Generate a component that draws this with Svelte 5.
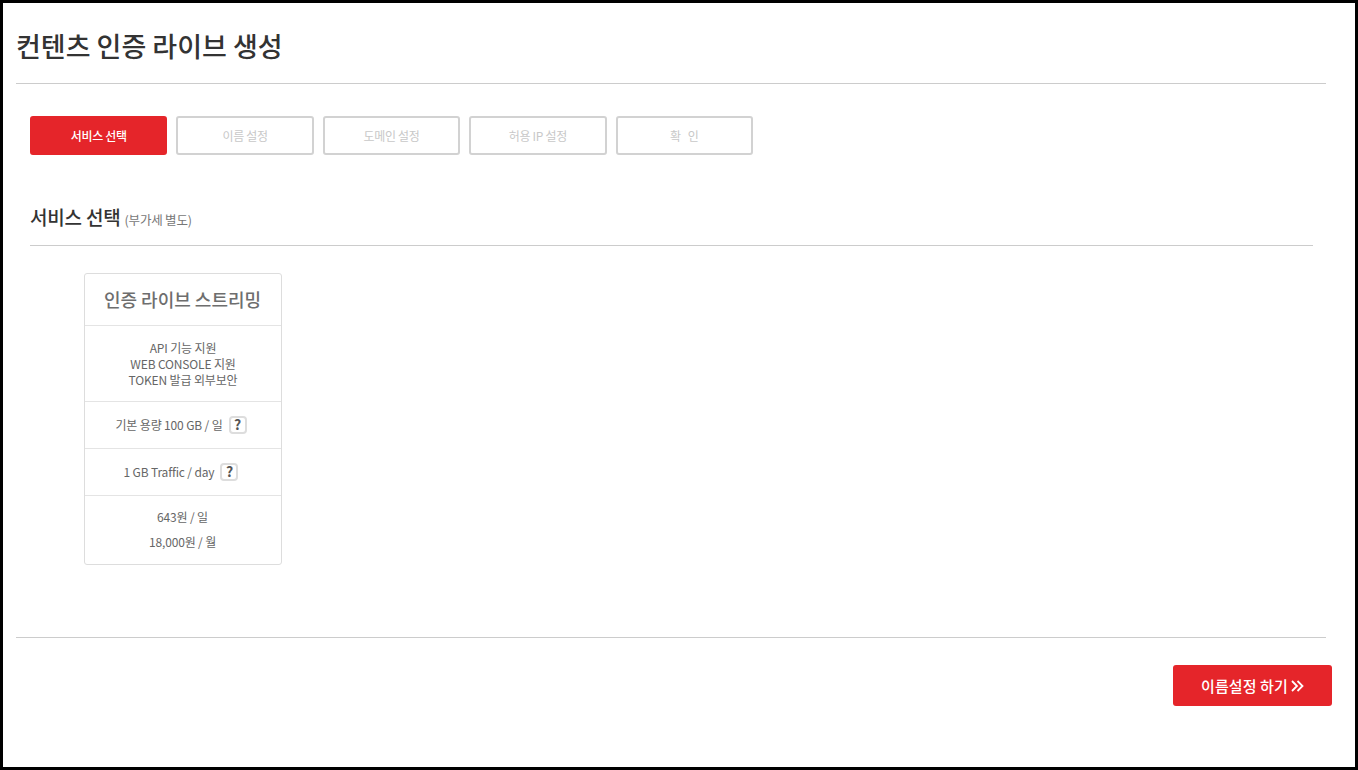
<script>
  const steps = ['서비스 선택', '이름 설정', '도메인 설정', '허용 IP 설정', '확   인'];
</script>

<div class="frame">
  <main class="page">
    <h1>컨텐츠 인증 라이브 생성</h1>
    <div class="body">
      <ul class="steps">
        {#each steps as s, i}
          <li class:active={i === 0}>{s}</li>
        {/each}
      </ul>
      <h2>서비스 선택 <small>(부가세 별도)</small></h2>
      <div class="card">
        <div class="card-title">인증 라이브 스트리밍</div>
        <div class="row features">API 기능 지원<br />WEB CONSOLE 지원<br />TOKEN 발급 외부보안</div>
        <div class="row info"><span>기본 용량 100 GB / 일</span><span class="q">?</span></div>
        <div class="row info"><span>1 GB Traffic / day</span><span class="q">?</span></div>
        <div class="row price"><p>643원 / 일</p><p>18,000원 / 월</p></div>
      </div>
    </div>
    <div class="footer">
      <button type="button">이름설정 하기<svg width="13" height="12" viewBox="0 0 13 12" aria-hidden="true"><path d="M1 1l5 5-5 5M6.500 1l5 5-5 5" fill="none" stroke="#fff" stroke-width="1.800" /></svg></button>
    </div>
  </main>
</div>

<style>
  :global(body) {
    margin: 0;
    background: #fff;
  }
  .frame {
    box-sizing: border-box;
    width: 1358px;
    height: 770px;
    border: 3px solid #000;
    font-family: "Noto Sans CJK KR", "Noto Sans", sans-serif;
    color: #333;
    overflow: hidden;
  }
  .page {
    padding: 0 29px 0 13px;
  }
  h1 {
    margin: 0;
    height: 81px;
    box-sizing: border-box;
    padding-top: 24px;
    font-size: 27px;
    line-height: 38px;
    font-weight: 500;
    border-bottom: 1px solid #ccc;
    color: #333;
  }
  .body {
    padding: 32px 13px 0 14px;
    height: 554px;
    box-sizing: border-box;
    border-bottom: 1px solid #ccc;
  }
  .steps {
    display: flex;
    gap: 8.950px;
    list-style: none;
    margin: 0;
    padding: 0;
  }
  .steps li {
    box-sizing: border-box;
    width: 137.450px;
    height: 39px;
    border: 2px solid #d2d2d2;
    border-radius: 3px;
    font-size: 12px;
    letter-spacing: -0.300px;
    line-height: 35px;
    text-align: center;
    color: #c8c8c8;
    white-space: pre;
  }
  .steps li.active {
    background: #e5252a;
    border-color: #e5252a;
    color: #fff;
    font-weight: 500;
  }
  h2 {
    margin: 47px 0 0;
    height: 44px;
    box-sizing: border-box;
    font-size: 19px;
    line-height: 30px;
    font-weight: 500;
    letter-spacing: -0.200px;
    border-bottom: 1px solid #ccc;
    color: #333;
  }
  h2 small {
    font-size: 12.500px;
    font-weight: 400;
    color: #777;
  }
  .card {
    box-sizing: border-box;
    width: 198px;
    margin: 27px 0 0 54px;
    border: 1px solid #ddd;
    border-radius: 3px;
    text-align: center;
    color: #666;
    font-size: 12px;
    letter-spacing: -0.150px;
    line-height: 16px;
  }
  .card-title {
    height: 51px;
    padding-right: 1px;
    font-size: 18px;
    letter-spacing: 0;
    line-height: 51px;
    font-weight: 500;
    color: #6e6e6e;
  }
  .row {
    border-top: 1px solid #e4e4e4;
  }
  .features {
    height: 76px;
    box-sizing: border-box;
    padding-top: 14px;
  }
  .info {
    box-sizing: border-box;
    height: 47px;
    padding-right: 4px;
    display: flex;
    align-items: center;
    justify-content: center;
    gap: 6px;
  }
  .q {
    box-sizing: border-box;
    width: 18px;
    height: 18px;
    border: 2px solid #ddd;
    border-radius: 4px;
    font-size: 14px;
    line-height: 13px;
    font-weight: 700;
    color: #555;
  }
  .price {
    box-sizing: border-box;
    height: 69px;
    padding: 13px 1px 0 0;
  }
  .price p {
    margin: 0 0 9px;
  }
  .footer {
    display: flex;
    justify-content: flex-end;
    margin-right: -6px;
    padding-top: 27px;
  }
  button {
    width: 159px;
    height: 41px;
    border: 0;
    border-radius: 3px;
    background: #e5252a;
    color: #fff;
    font-family: inherit;
    font-size: 15px;
    letter-spacing: 0.100px;
    font-weight: 500;
    display: flex;
    align-items: center;
    justify-content: center;
    gap: 3px;
    padding: 0;
  }
</style>
